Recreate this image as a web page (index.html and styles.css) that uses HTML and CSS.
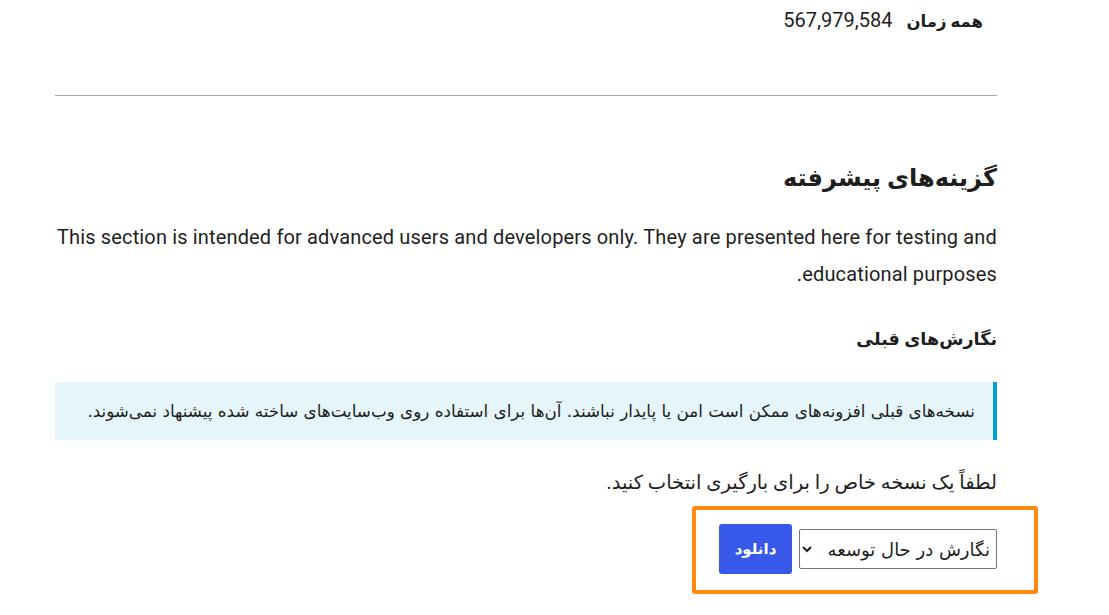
FILE: index.html
```html
<!DOCTYPE html>
<html lang="fa" dir="rtl">
<head>
<meta charset="utf-8">
<link rel="stylesheet" href="styles.css">
</head>
<body>
<main class="page">
  <div class="stat-row">
    <span class="stat-label">همه زمان</span>
    <span class="stat-value">567,979,584</span>
  </div>
  <hr class="divider">
  <section class="advanced">
    <h2 class="title">گزینه‌های پیشرفته</h2>
    <p class="intro">This section is intended for advanced users and developers only. They are presented here for testing and educational purposes.</p>
    <h3 class="subtitle">نگارش‌های قبلی</h3>
    <div class="notice">نسخه‌های قبلی افزونه‌های ممکن است امن یا پایدار نباشند. آن‌ها برای استفاده روی وب‌سایت‌های ساخته شده پیشنهاد نمی‌شوند.</div>
    <p class="hint">لطفاً یک نسخه خاص را برای بارگیری انتخاب کنید.</p>
    <div class="form-row">
      <div class="form">
        <select class="version">
          <option>نگارش در حال توسعه</option>
        </select>
        <button class="download">دانلود</button>
      </div>
    </div>
  </section>
</main>
</body>
</html>
```
FILE: styles.css
```css
html, body {
  margin: 0;
  padding: 0;
  background: #fff;
}
body {
  font-family: Roboto, "DejaVu Sans", "Noto Sans", sans-serif;
  color: #1e1e1e;
  font-size: 20px;
}
.page {
  width: 942px;
  margin: 0 112px 0 0;
  direction: rtl;
}
.stat-row {
  display: flex;
  align-items: baseline;
  gap: 14px;
  padding: 6px 14px 0 0;
  height: 82px;
  box-sizing: border-box;
  line-height: 28px;
}
.stat-label {
  font-weight: 700;
  font-size: 16.5px;
}
.stat-value {
  direction: ltr;
  font-size: 20px;
}
.divider {
  border: 0;
  border-top: 1px solid #a7a7a7;
  margin: 13px 0 0;
  height: 0;
}
.title {
  font-size: 24px;
  font-weight: 700;
  margin: 62px 0 0;
  line-height: 40px;
}
.intro {
  margin: 21px 0 0;
  line-height: 37px;
  font-size: 20px;
  letter-spacing: 0.15px;
}
.subtitle {
  font-size: 17.6px;
  font-weight: 700;
  margin: 30px 0 0;
  line-height: 32px;
}
.notice {
  margin-top: 27px;
  background: #e5f5fa;
  border-right: 4px solid #00a0d2;
  padding: 16px 18px;
  font-size: 16.75px;
  line-height: 26px;
  font-family: "DejaVu Sans", Roboto, sans-serif;
}
.hint {
  margin: 28px 0 0;
  font-size: 19.5px;
  line-height: 30px;
}
.form-row {
  display: flex;
  margin-top: 18px;
}
.form {
  position: relative;
  display: flex;
  align-items: center;
  gap: 7px;
  padding: 8px 0 20px;
}
.form::after {
  content: "";
  position: absolute;
  top: -10px;
  bottom: 0;
  left: -27px;
  right: -41px;
  border: 4px solid #ff8a0d;
  border-radius: 3px;
  pointer-events: none;
}
.version {
  direction: rtl;
  height: 40px;
  width: 198px;
  font-size: 18px;
  font-family: "DejaVu Sans", Roboto, sans-serif;
  color: #1e1e1e;
  border: 1px solid #767676;
  border-radius: 2px;
  background: #fff;
  padding: 0 2px;
}
.download {
  height: 50px;
  width: 73px;
  background: #3858e9;
  color: #fff;
  border: 0;
  border-radius: 3px;
  font-family: "DejaVu Sans", Roboto, sans-serif;
  font-weight: 700;
  font-size: 15px;
}
```
